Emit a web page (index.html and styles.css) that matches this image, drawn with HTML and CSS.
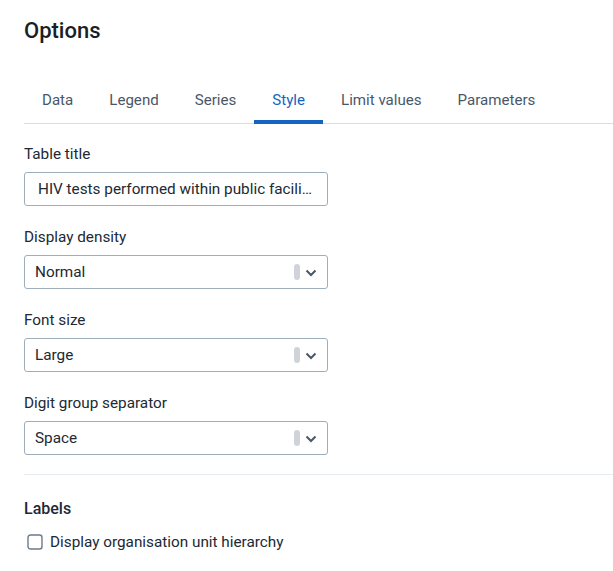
FILE: index.html
```html
<!DOCTYPE html>
<html lang="en">
<head>
<meta charset="utf-8">
<title>Options</title>
<link rel="stylesheet" href="styles.css">
</head>
<body>
<div class="page">
  <h1 class="title">Options</h1>
  <nav class="tabs">
    <div class="tab">Data</div>
    <div class="tab">Legend</div>
    <div class="tab">Series</div>
    <div class="tab active">Style</div>
    <div class="tab">Limit values</div>
    <div class="tab">Parameters</div>
  </nav>
  <section class="fields">
    <div class="field">
      <label class="label">Table title</label>
      <div class="input">HIV tests performed within public facili…</div>
    </div>
    <div class="field">
      <label class="label">Display density</label>
      <div class="select">
        <span class="value">Normal</span>
        <span class="thumb"></span>
        <svg class="chev" width="12" height="8" viewBox="0 0 12 8"><path d="M1.5 1.5 L6 6 L10.5 1.5" fill="none" stroke="#4a5768" stroke-width="2"/></svg>
      </div>
    </div>
    <div class="field">
      <label class="label">Font size</label>
      <div class="select">
        <span class="value">Large</span>
        <span class="thumb"></span>
        <svg class="chev" width="12" height="8" viewBox="0 0 12 8"><path d="M1.5 1.5 L6 6 L10.5 1.5" fill="none" stroke="#4a5768" stroke-width="2"/></svg>
      </div>
    </div>
    <div class="field">
      <label class="label">Digit group separator</label>
      <div class="select">
        <span class="value">Space</span>
        <span class="thumb"></span>
        <svg class="chev" width="12" height="8" viewBox="0 0 12 8"><path d="M1.5 1.5 L6 6 L10.5 1.5" fill="none" stroke="#4a5768" stroke-width="2"/></svg>
      </div>
    </div>
  </section>
  <hr class="divider">
  <section class="group">
    <h2 class="group-title">Labels</h2>
    <label class="checkbox">
      <svg class="box" width="16" height="16" viewBox="0 0 16 16"><rect x="1" y="1" width="14" height="14" rx="2.5" fill="#fff" stroke="#6e7a8a" stroke-width="1.4"/></svg>
      <span>Display organisation unit hierarchy</span>
    </label>
  </section>
</div>
</body>
</html>
```

FILE: styles.css
```css
* { box-sizing: border-box; }
html, body { margin: 0; padding: 0; background: #fff; }
body {
  font-family: Roboto, "Liberation Sans", sans-serif;
  color: #212934;
}
.page {
  padding-left: 24px;
}
.title {
  margin: 18px 0 0;
  font-size: 22px;
  line-height: 26px;
  font-weight: 500;
  color: #1a1f26;
}
.tabs {
  display: flex;
  margin-top: 31px;
  border-bottom: 1px solid #d5dde5;
}
.tab {
  position: relative;
  height: 48px;
  padding: 2px 18px 0;
  display: flex;
  align-items: center;
  font-size: 15.1px;
  color: #4a5768;
}
.tab.active { color: #1565c0; }
.tab.active::after {
  content: "";
  position: absolute;
  left: 0;
  right: 0;
  bottom: -1px;
  height: 4px;
  background: #1565c0;
}
.fields {
  margin-top: 21px;
  display: flex;
  flex-direction: column;
  gap: 22px;
}
.field { display: flex; flex-direction: column; }
.label {
  font-size: 15.3px;
  line-height: 18px;
  margin-bottom: 9px;
  color: #212934;
}
.input, .select {
  width: 304px;
  height: 34px;
  border: 1px solid #a0adba;
  border-radius: 3px;
  font-size: 15.3px;
  color: #212934;
  display: flex;
  align-items: center;
}
.input {
  padding: 0 4px 0 13px;
  white-space: nowrap;
  overflow: hidden;
}
.select { padding: 0 10px 0 10px; }
.value { flex: 1; }
.thumb {
  width: 6px;
  height: 16px;
  border-radius: 3px;
  background: #d0d4d9;
  margin-right: 5px;
}
.chev { display: block; margin-top: 2px; }
.divider {
  margin: 19px 0 0;
  border: 0;
  border-top: 1px solid #e8edf2;
  height: 0;
}
.group { padding-top: 24px; }
.group-title {
  margin: 0;
  font-size: 16px;
  line-height: 20px;
  font-weight: 500;
  color: #212934;
}
.checkbox {
  margin-top: 14px;
  padding-left: 3px;
  display: flex;
  align-items: center;
  gap: 7px;
  font-size: 15.3px;
  line-height: 18px;
  color: #212934;
}
.box { display: block; }
```
